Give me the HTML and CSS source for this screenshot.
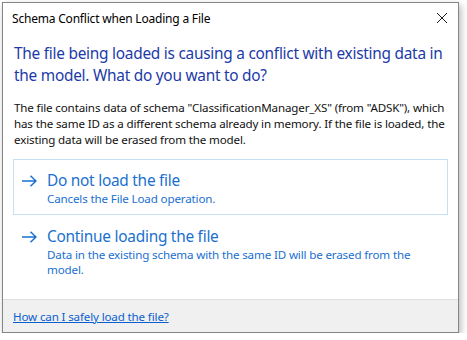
FILE: index.html
```html
<!DOCTYPE html>
<html>
<head>
<meta charset="utf-8">
<link rel="stylesheet" href="styles.css">
</head>
<body>
<div class="window">
  <div class="titlebar">
    <span class="title">Schema Conflict when Loading a File</span>
    <svg class="close" width="12" height="12" viewBox="0 0 12 12"><path d="M1 1L11 11M11 1L1 11" stroke="#1a1a1a" stroke-width="1" fill="none"/></svg>
  </div>
  <div class="content">
    <div class="instruction">The file being loaded is causing a conflict with existing data in the model. What do you want to do?</div>
    <div class="body">The file contains data of schema "ClassificationManager_XS" (from "ADSK"), which has the same ID as a different schema already in memory. If the file is loaded, the existing data will be erased from the model.</div>
    <div class="links">
      <div class="cmd hover">
        <svg class="arrow" width="16" height="12" viewBox="0 0 16 12"><path d="M1 6H15M9.5 0.8L15 6L9.5 11.2" stroke="#1a6fd0" stroke-width="1.5" fill="none"/></svg>
        <div class="cmd-text">
          <div class="cmd-title">Do not load the file</div>
          <div class="cmd-sub">Cancels the File Load operation.</div>
        </div>
      </div>
      <div class="cmd">
        <svg class="arrow" width="16" height="12" viewBox="0 0 16 12"><path d="M1 6H15M9.5 0.8L15 6L9.5 11.2" stroke="#1a6fd0" stroke-width="1.5" fill="none"/></svg>
        <div class="cmd-text">
          <div class="cmd-title">Continue loading the file</div>
          <div class="cmd-sub">Data in the existing schema with the same ID will be erased from the model.</div>
        </div>
      </div>
    </div>
  </div>
  <div class="footer">
    <a class="help" href="#">How can I safely load the file?</a>
  </div>
</div>
</body>
</html>
```
FILE: styles.css
```css
html, body {
  margin: 0;
  padding: 0;
  background: #ffffff;
}
body {
  font-family: "Noto Sans", "Open Sans", sans-serif;
}
.window {
  margin: 2px 0 0 2px;
  width: 455px;
  height: 329px;
  border: 1px solid #858585;
  box-shadow: 2px 3px 7px rgba(0, 0, 0, 0.28);
  background: #ffffff;
  display: flex;
  flex-direction: column;
  box-sizing: content-box;
}
.titlebar {
  height: 30px;
  display: flex;
  align-items: center;
  justify-content: space-between;
  padding: 0 9px 0 9px;
}
.title {
  font-size: 12px;
  color: #000;
  letter-spacing: -0.2px;
}
.close {
  margin-right: 1px;
}
.content {
  flex: 1;
  padding: 10px 10px 0 10px;
}
.instruction {
  font-size: 15.4px;
  line-height: 22px;
  color: #1c3aa9;
  padding-left: 1px;
  letter-spacing: -0.25px;
}
.body {
  margin-top: 13px;
  font-size: 11.6px;
  line-height: 16px;
  color: #111111;
  padding-left: 1px;
  letter-spacing: -0.15px;
}
.links {
  margin-top: 11px;
  display: flex;
  flex-direction: column;
}
.cmd {
  display: flex;
  align-items: flex-start;
  border: 1px solid transparent;
  padding: 11px 8px 8px 7px;
}
.cmd.hover {
  border-color: #c6e0f6;
  height: 35px;
}
.arrow {
  margin-top: 4px;
  margin-right: 10px;
  flex: none;
}
.cmd-title {
  font-size: 15.4px;
  line-height: 20px;
  color: #1a6fd0;
  letter-spacing: -0.25px;
}
.cmd-sub {
  font-size: 11.6px;
  line-height: 15px;
  color: #1a6fd0;
  margin-top: 0;
  letter-spacing: -0.15px;
}
.footer {
  height: 32px;
  background: #f0f0f0;
  border-top: 1px solid #dfdfdf;
  display: flex;
  align-items: center;
  padding-left: 10px;
}
.help {
  font-size: 11.6px;
  color: #0a5fcf;
  text-decoration: underline;
  letter-spacing: -0.15px;
}
```
